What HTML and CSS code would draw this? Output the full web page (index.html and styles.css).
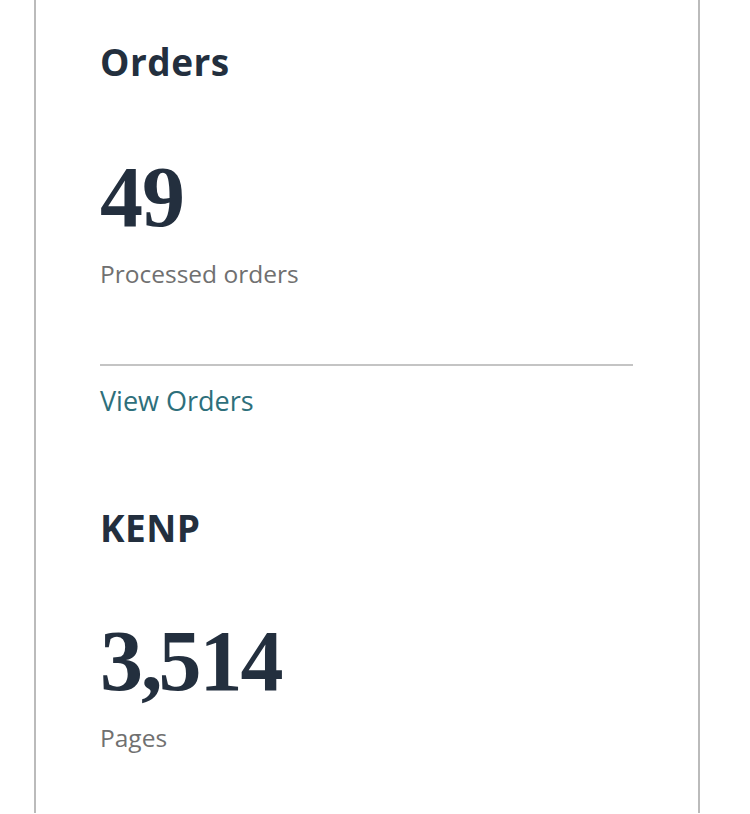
FILE: index.html
```html
<!DOCTYPE html>
<html lang="en">
<head>
    <meta charset="UTF-8">
    <meta name="viewport" content="width=device-width, initial-scale=1.0">
    <title>Dashboard</title>
    <link rel="stylesheet" href="styles.css">
</head>
<body>
    <section class="panel">
        <div class="stat">
            <h2>Orders</h2>
            <div class="num">49</div>
            <div class="label">Processed orders</div>
        </div>
        <hr class="line">
        <a class="link" href="#">View Orders</a>
        <div class="stat kenp">
            <h2>KENP</h2>
            <div class="num">3<span class="comma">,</span>514</div>
            <div class="label">Pages</div>
        </div>
    </section>
</body>
</html>
```

FILE: styles.css
```css
body{
    margin: 0;
    background-color: #fff;
    font-family: "Open Sans", "Noto Sans", sans-serif;
}

.panel{
    margin-left: 34px;
    width: 533px;
    min-height: 771px;
    padding: 42px 65px 0 64px;
    border-left: 2px solid #bbb;
    border-right: 2px solid #bbb;
}

.stat h2{
    margin: 0;
    font-size: 37px;
    line-height: 40px;
    font-weight: 700;
    letter-spacing: 0.5px;
    color: #232f3e;
}

.num{
    margin-top: 73px;
    font-family: "Liberation Serif", serif;
    font-weight: 700;
    font-size: 86px;
    line-height: 84px;
    letter-spacing: -1px;
    color: #232f3e;
}

.comma{
    letter-spacing: -4px;
}

.label{
    margin-top: 20px;
    font-size: 24.5px;
    line-height: 30px;
    color: #707070;
}

.line{
    margin: 75px 0 0 0;
    border: 0;
    height: 2px;
    background-color: #c4c4c4;
}

.link{
    display: block;
    margin-top: 19px;
    font-size: 27px;
    line-height: 32px;
    color: #2e6f7b;
    text-decoration: none;
}

.kenp{
    margin-top: 91px;
}

.kenp .num{
    margin-top: 71px;
    letter-spacing: -2px;
}
```
